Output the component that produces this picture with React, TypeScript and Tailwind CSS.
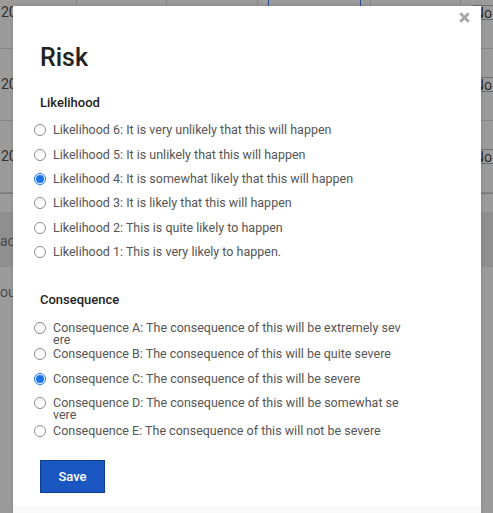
import React from "react";

const likelihood = [
  "Likelihood 6: It is very unlikely that this will happen",
  "Likelihood 5: It is unlikely that this will happen",
  "Likelihood 4: It is somewhat likely that this will happen",
  "Likelihood 3: It is likely that this will happen",
  "Likelihood 2: This is quite likely to happen",
  "Likelihood 1: This is very likely to happen.",
];

const consequence: { text: string; h: string }[] = [
  { text: "Consequence A: The consequence of this will be extremely severe", h: "h-[26.4px]" },
  { text: "Consequence B: The consequence of this will be quite severe", h: "h-[25px]" },
  { text: "Consequence C: The consequence of this will be severe", h: "h-[24px]" },
  { text: "Consequence D: The consequence of this will be somewhat severe", h: "h-[28px]" },
  { text: "Consequence E: The consequence of this will not be severe", h: "h-[24.3px]" },
];

function Radio({ checked }: { checked: boolean }) {
  if (checked) {
    return (
      <span className="flex h-[12px] w-[12px] shrink-0 items-center justify-center rounded-full border border-[#1a73e8] bg-white">
        <span className="h-[8px] w-[8px] rounded-full bg-[#1a73e8]" />
      </span>
    );
  }
  return <span className="h-[12px] w-[12px] shrink-0 rounded-full border border-[#8c8c8c] bg-white" />;
}

function Row({ text, checked, h }: { text: string; checked: boolean; h: string }) {
  return (
    <div className={`flex items-start ${h}`}>
      <div className="flex h-[24.3px] w-[19px] shrink-0 items-center">
        <Radio checked={checked} />
      </div>
      <div className="w-[351px] break-all pt-[6.15px] text-[12.5px] leading-[12px] text-[#555555]">{text}</div>
    </div>
  );
}

function BgRow({ first }: { first?: boolean }) {
  return (
    <div className="flex h-[72px] border-b border-[#858585]">
      <div className="flex w-[77px] items-center border-r border-[#858585] pl-[1px] text-[14px] text-[#2e2e2e]">20</div>
      <div className="w-[90px] border-r border-[#858585]" />
      <div className="w-[91px] border-r border-[#858585]" />
      <div className="w-[10px]" />
      <div className={`w-[93px] ${first ? "border-x border-[#2d4f8f]" : ""}`} />
      <div className="w-[10px] border-r border-[#858585]" />
      <div className="w-[90px] border-r border-[#858585]" />
      <div className="flex flex-1 items-center justify-end">
        <div className="flex h-[15px] w-[20px] items-center border-y border-[#6e6e6e] pl-[1px] text-[14px] leading-none text-[#2e2e2e]">
          No
        </div>
      </div>
    </div>
  );
}

export default function App() {
  return (
    <div
      className="relative h-[513px] w-[493px] overflow-hidden bg-[#9b9b9b]"
      style={{ fontFamily: "Roboto, 'Liberation Sans', sans-serif" }}
    >
      {/* background page under overlay */}
      <div className="-mt-[23px] flex flex-col">
        <BgRow first />
        <BgRow />
        <BgRow />
        <div className="h-[1px] bg-[#7a7a7a]" />
        <div className="h-[18px]" />
        <div className="flex h-[55px] items-center bg-[#8f8f8f] pt-[3px] text-[14px] text-[#4a4a4a]">ac</div>
        <div className="flex h-[50px] items-center text-[14px] text-[#4a4a4a]">ou</div>
      </div>

      {/* modal */}
      <div className="absolute left-[13px] top-[6px] flex h-[520px] w-[468px] flex-col bg-white shadow-[0_0_4px_rgba(0,0,0,0.15)]">
        <button className="absolute right-[11px] top-[5px] flex h-[12px] w-[12px] items-center justify-center">
          <svg width="11" height="11" viewBox="0 0 11 11">
            <path d="M1.3 1.3 L9.7 9.7 M9.7 1.3 L1.3 9.7" stroke="#a6a6a6" strokeWidth="2.8" strokeLinecap="butt" />
          </svg>
        </button>

        <div className="flex flex-col pl-[27px] pt-[36px]">
          <h1 className="text-[25px] font-medium leading-[32px] text-[#222222]">Risk</h1>
          <h2 className="mt-[19px] text-[13px] font-medium leading-[20px] text-[#222222]">Likelihood</h2>
        </div>
        <div className="mt-[5.3px] flex flex-col pl-[21px]">
          {likelihood.map((t, i) => (
            <Row key={t} text={t} checked={i === 2} h="h-[24.3px]" />
          ))}
        </div>

        <div className="mt-[25.6px] flex flex-col pl-[27px]">
          <h2 className="text-[13px] font-medium leading-[20px] text-[#222222]">Consequence</h2>
        </div>
        <div className="mt-[5.7px] flex flex-col pl-[21px]">
          {consequence.map((c, i) => (
            <Row key={c.text} text={c.text} checked={i === 2} h={c.h} />
          ))}
        </div>

        <div className="mt-[17px] pl-[27px]">
          <button className="flex h-[33px] w-[65px] items-center justify-center border border-[#0f3d8c] bg-[#1b57c0] text-[13px] font-medium text-white">
            Save
          </button>
        </div>

        <div className="mt-auto h-[20px] bg-[#f9f9f9]" />
      </div>
    </div>
  );
}
